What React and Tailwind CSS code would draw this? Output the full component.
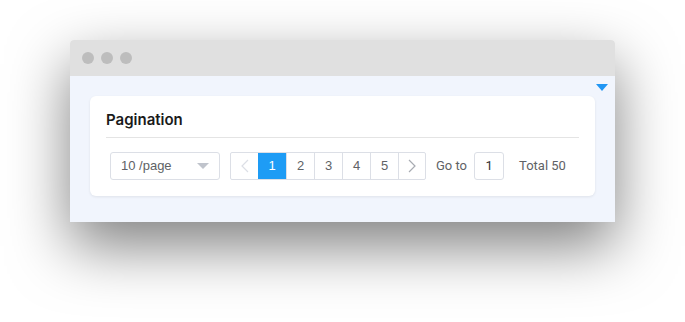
const PAGES = [1, 2, 3, 4, 5];

function Chevron({ dir, className }) {
  return (
    <svg width="8" height="14" viewBox="0 0 8 14" className={className}>
      <path
        d={dir === "left" ? "M7 1L1 7l6 6" : "M1 1l6 6-6 6"}
        fill="none"
        stroke="currentColor"
        strokeWidth="1.2"
      />
    </svg>
  );
}

function PageSize() {
  return (
    <div className="w-[110px] h-[28px] border border-[#dcdfe6] rounded-[3px] flex items-center justify-between pl-[10px] pr-[10px] font-['Liberation_Sans',sans-serif] text-[13px] text-[#606266]">
      <span>10 /page</span>
      <svg width="12" height="6" viewBox="0 0 12 6">
        <path d="M0 0h12L6 6z" fill="#c0c4cc" />
      </svg>
    </div>
  );
}

function Pager() {
  return (
    <div className="flex h-[28px] border border-[#dcdfe6] rounded-[2px] font-['Liberation_Sans',sans-serif] text-[13px] text-[#606266]">
      <div className="w-[27px] flex items-center justify-center text-[#dcdfe6]">
        <Chevron dir="left" />
      </div>
      {PAGES.map((n) => (
        <div
          key={n}
          className={
            n === 1
              ? "w-[28px] flex items-center justify-center bg-[#1e9cf5] text-white"
              : "w-[28px] flex items-center justify-center border-l border-[#dcdfe6]"
          }
        >
          {n}
        </div>
      ))}
      <div className="w-[27px] flex items-center justify-center border-l border-[#dcdfe6] text-[#a8abb2]">
        <Chevron dir="right" />
      </div>
    </div>
  );
}

export default function App() {
  return (
    <div className="w-[685px] h-[322px] bg-white pt-[40px] font-['Inter',sans-serif]">
      <div className="mx-auto w-[545px] rounded-t-[4px] overflow-hidden shadow-[0_24px_60px_0_rgba(0,0,0,0.5)]">
        <div className="h-[36px] bg-[#e0e0e0] flex items-center gap-[7px] pl-[12px]">
          <span className="w-[12px] h-[12px] rounded-full bg-[#bdbdbd]" />
          <span className="w-[12px] h-[12px] rounded-full bg-[#bdbdbd]" />
          <span className="w-[12px] h-[12px] rounded-full bg-[#bdbdbd]" />
        </div>
        <div className="relative bg-[#f1f5fd] h-[146px] px-[20px] pt-[20px]">
          <svg
            width="12"
            height="7"
            viewBox="0 0 12 7"
            className="absolute right-[7px] top-[8px]"
          >
            <path d="M0 0h12L6 7z" fill="#2196f3" />
          </svg>
          <div className="bg-white rounded-[6px] shadow-[0_1px_3px_rgba(0,0,0,0.08)] px-[16px] pt-[15px] pb-[16px]">
            <div className="text-[15px] font-semibold text-[#1a1a1a] pb-[8px] border-b border-[#e4e4e4] leading-[18px]">
              Pagination
            </div>
            <div className="flex items-center mt-[14px] pl-[4px] text-[13px] text-[#606266] font-['Roboto',sans-serif]">
              <PageSize />
              <div className="ml-[10px]">
                <Pager />
              </div>
              <span className="ml-[10px]">Go to</span>
              <div className="ml-[7px] w-[30px] h-[28px] border border-[#dcdfe6] rounded-[3px] flex items-center justify-center text-[#303133]">
                1
              </div>
              <span className="ml-[15px]">Total 50</span>
            </div>
          </div>
        </div>
      </div>
    </div>
  );
}
